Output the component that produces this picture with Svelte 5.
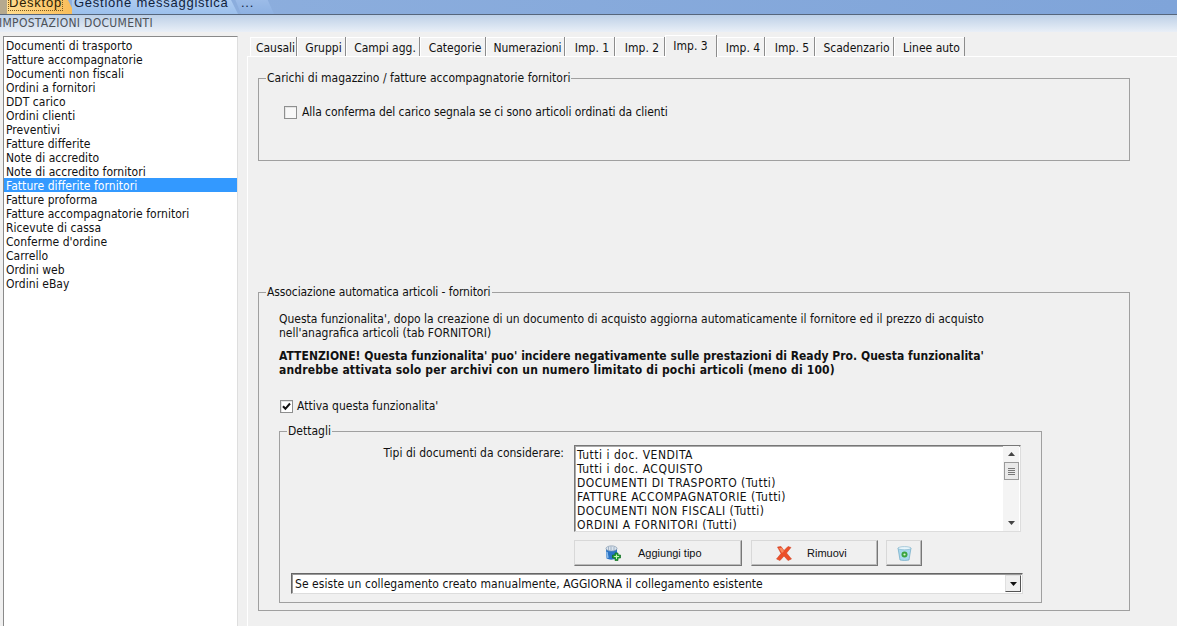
<script>
  const docs = [
    "Documenti di trasporto", "Fatture accompagnatorie", "Documenti non fiscali", "Ordini a fornitori",
    "DDT carico", "Ordini clienti", "Preventivi", "Fatture differite", "Note di accredito",
    "Note di accredito fornitori", "Fatture differite fornitori", "Fatture proforma",
    "Fatture accompagnatorie fornitori", "Ricevute di cassa", "Conferme d'ordine", "Carrello",
    "Ordini web", "Ordini eBay"
  ];
  const tabs = [
    ["Causali", 47], ["Gruppi", 49], ["Campi agg.", 74], ["Categorie", 66], ["Numerazioni", 79], ["Imp. 1", 50],
    ["Imp. 2", 50], ["Imp. 3", 52], ["Imp. 4", 48], ["Imp. 5", 50], ["Scadenzario", 79], ["Linee auto", 71]
  ];
  const tipi = [
    "Tutti i doc. VENDITA", "Tutti i doc. ACQUISTO", "DOCUMENTI DI TRASPORTO (Tutti)",
    "FATTURE ACCOMPAGNATORIE (Tutti)", "DOCUMENTI NON FISCALI (Tutti)", "ORDINI A FORNITORI (Tutti)"
  ];
  let selected = "Fatture differite fornitori";
  let activeTab = "Imp. 3";
</script>

<div class="topbar">
  <div class="apptab active"><span>Desktop</span></div>
  <div class="apptab">Gestione messaggistica</div>
  <div class="apptab more">...</div>
</div>
<div class="titlebar">IMPOSTAZIONI DOCUMENTI</div>

<div class="main">
  <ul class="doclist">
    {#each docs as d}
      <li class:sel={d === selected}>{d}</li>
    {/each}
  </ul>

  <div class="right">
    <div class="tabs">
      {#each tabs as [t, w]}
        <div class="tab" class:on={t === activeTab} style="width:{w}px">{t}</div>
      {/each}
    </div>
    <div class="panel">
      <fieldset class="g1">
        <legend>Carichi di magazzino / fatture accompagnatorie fornitori</legend>
        <label class="check"><span class="box"></span>Alla conferma del carico segnala se ci sono articoli ordinati da clienti</label>
      </fieldset>

      <fieldset class="g2">
        <legend>Associazione automatica articoli - fornitori</legend>
        <p class="info">Questa funzionalita', dopo la creazione di un documento di acquisto aggiorna automaticamente il fornitore ed il prezzo di acquisto<br />nell'anagrafica articoli (tab FORNITORI)</p>
        <p class="warn">ATTENZIONE! Questa funzionalita' puo' incidere negativamente sulle prestazioni di Ready Pro. Questa funzionalita'<br /><span class="wide">andrebbe attivata solo per archivi con un numero limitato di pochi articoli (meno di 100)</span></p>
        <label class="check on"><span class="box">
          <svg width="9" height="9" viewBox="0 0 9 9"><path d="M1 4.2 L3.4 6.8 L8 1.5" fill="none" stroke="#111" stroke-width="2" /></svg>
        </span>Attiva questa funzionalita'</label>

        <fieldset class="g3">
          <legend>Dettagli</legend>
          <div class="tipi">
            <div class="tipilabel">Tipi di documenti da considerare:</div>
            <div class="listbox">
              <ul>
                {#each tipi as t}<li>{t}</li>{/each}
              </ul>
              <div class="scroll">
                <svg width="7" height="4" viewBox="0 0 7 4"><path d="M3.5 0 L7 4 H0 Z" fill="#444" /></svg>
                <div class="thumb"><i></i><i></i><i></i><i></i></div>
                <svg class="down" width="7" height="4" viewBox="0 0 7 4"><path d="M0 0 H7 L3.5 4 Z" fill="#444" /></svg>
              </div>
            </div>
          </div>
          <div class="buttons">
            <button class="add">
              <svg width="16" height="16" viewBox="0 0 16 16">
                <path d="M1 4 L12 4 L12 13 Q6.5 16 1.5 13.5 Z" fill="#2b74c6" />
                <path d="M2 7 Q2.5 11 3 13" stroke="#8fc0ee" stroke-width="1.4" fill="none" />
                <ellipse cx="6.5" cy="3.5" rx="5.5" ry="2.6" fill="#dbe4ee" stroke="#7d93ab" stroke-width=".7" />
                <path d="M3.5 2 V5 M6 1.5 V5.5 M9 2 V5" stroke="#93a6ba" stroke-width=".8" />
                <path d="M10 8 H13 V10 H15.5 V13 H13 V15.5 H10 V13 H7.5 V10 H10 Z" fill="#27a53a" stroke="#0d6b1e" stroke-width=".7" />
                <path d="M11.5 9.5 V14 M9.2 11.5 H14" stroke="#c9f7b8" stroke-width="1" />
              </svg>
              <span>Aggiungi tipo</span>
            </button>
            <button class="rem">
              <svg width="16" height="15" viewBox="0 0 16 15">
                <path d="M1.5 1 L5 0.5 L8 4.5 L12 0.5 L15 1.5 L10.5 7 L15.5 13 L12 14.5 L8 10 L4 14.5 L0.5 13 L5 7.5 Z" fill="#ec5029" stroke="#c9391c" stroke-width=".5" />
                <path d="M3 2 L6 2 L8 5 L6 7 Z" fill="#f78a60" />
              </svg>
              <span>Rimuovi</span>
            </button>
            <button class="bin" aria-label="Cestino">
              <svg width="15" height="15" viewBox="0 0 15 15">
                <path d="M1 2 L14 2 L12 14 Q7.5 15 3 14 Z" fill="#a9d9ee" stroke="#6fa8c4" stroke-width=".7" />
                <ellipse cx="7.5" cy="2.2" rx="6.5" ry="1.6" fill="#e8f5fa" stroke="#7fb2cb" stroke-width=".6" />
                <circle cx="7.5" cy="8.5" r="3" fill="#3aa43f" />
                <circle cx="7.5" cy="8.5" r="1.1" fill="#d8f3d0" />
              </svg>
            </button>
          </div>
          <div class="combo">
            <span>Se esiste un collegamento creato manualmente, AGGIORNA il collegamento esistente</span>
            <div class="arrow">
              <svg width="7" height="4" viewBox="0 0 7 4"><path d="M0 0 H7 L3.5 4 Z" fill="#111" /></svg>
            </div>
          </div>
        </fieldset>
      </fieldset>
    </div>
  </div>
</div>

<style>
  :global(body) {
    margin: 0;
    background: #f0f0f0;
    overflow: hidden;
  }
  :global(#app) {
    height: 626px;
    overflow: hidden;
    font-family: "DejaVu Sans", sans-serif;
    font-stretch: condensed;
    font-size: 12px;
    color: #111;
  }
  .topbar {
    height: 14px;
    background: linear-gradient(90deg, #8fb0de, #7fa4d9);
    border-bottom: 1px solid #56667c;
    display: flex;
    overflow: hidden;
    align-items: flex-end;
  }
  .apptab {
    height: 20px;
    line-height: 17px;
    font-size: 13px;
    font-stretch: normal;
    font-family: "Liberation Sans", sans-serif;
    letter-spacing: 0.75px;
    margin-left: -3px;
    padding: 0 8px 0 2px;
    width: 156px;
    background: linear-gradient(#b4d0f2, #9cc0ec);
    clip-path: polygon(0 0, 156px 0, 100% 100%, 0 100%);
    flex: none;
    color: #10223c;
    white-space: nowrap;
  }
  .apptab.active {
    margin-left: 0;
    width: 54px;
    padding: 0 12px 0 9px;
    background: linear-gradient(90deg, #b5a98f 0 7px, #ffdc8e 7px, #f9bc58);
    clip-path: polygon(0 0, 65px 0, 100% 100%, 0 100%);
    color: #2b1d05;
  }
  .apptab.active span {
    outline: 1px dotted #7a5a20;
  }
  .apptab.more {
    width: 25px;
    padding: 0 8px 0 8px;
    background: linear-gradient(#a2c0ea, #8db1e2);
    clip-path: polygon(0 0, 32px 0, 100% 100%, 8px 100%);
    margin-left: -5px;
  }
  .titlebar {
    height: 17px;
    line-height: 16px;
    margin-bottom: 4px;
    background: linear-gradient(#bdd0e7, #e9eff7);
    color: #4c5158;
    letter-spacing: 0.3px;
    white-space: nowrap;
    margin-left: -1px;
  }
  .main {
    display: flex;
    height: 590px;
  }
  .doclist {
    list-style: none;
    margin: 0 0 0 3px;
    padding: 1px 0 0 0;
    width: 233px;
    flex: none;
    background: #fff;
    border: 1px solid #8a8a8a;
    border-right-color: #dedede;
    border-bottom: 0;
    height: 590px;
  }
  .doclist li {
    height: 14px;
    line-height: 16px;
    padding-left: 2px;
    letter-spacing: 0.05px;
    white-space: nowrap;
  }
  .doclist li.sel {
    background: #3399ff;
    color: #fff;
  }
  .right {
    margin-left: 9px;
    flex: 1;
    min-width: 0;
  }
  .tabs {
    display: flex;
    height: 20px;
    padding-left: 3px;
  }
  .tab {
    box-sizing: border-box;
    height: 19px;
    margin-top: 1px;
    line-height: 23px;
    padding-left: 5px;
    text-align: center;
    white-space: nowrap;
    background: #f3f3f3;
    border-right: 1px solid #8c8c8c;
    box-shadow: inset 1px 1px 0 #fff;
  }
  .tab.on {
    height: 22px;
    margin-top: -1px;
    line-height: 22px;
    position: relative;
    z-index: 1;
    padding-left: 0;
    background: #f0f0f0;
  }
  .panel {
    border-top: 1px solid #fff;
    border-left: 1px solid #fff;
    padding: 14px 0 0 10px;
    height: 560px;
  }
  fieldset {
    margin: 0;
    padding: 0;
    border: 1px solid #a0a0a0;
    box-sizing: border-box;
    min-width: 0;
  }
  legend {
    padding: 0 1px;
    margin-left: 7px;
    line-height: 14px;
  }
  .g1 {
    width: 872px;
    height: 90px;
  }
  .g2 {
    width: 872px;
    height: 326px;
    margin-top: 124px;
  }
  .g2 > legend {
    letter-spacing: -0.1px;
  }
  .check {
    display: flex;
    align-items: center;
    height: 14px;
  }
  .box {
    width: 11px;
    height: 11px;
    margin-right: 5px;
    background: #f8f8f8;
    border: 1px solid #8e8f8f;
    box-shadow: inset 1px 1px 0 #e4e4e4;
    display: flex;
    align-items: center;
    justify-content: center;
    flex: none;
  }
  .g1 .check {
    margin: 20px 0 0 25px;
    letter-spacing: -0.08px;
  }
  .info,
  .warn {
    margin: 0;
    line-height: 14px;
    white-space: nowrap;
    margin-left: 20px;
  }
  .info {
    margin-top: 12px;
    padding-top: 1px;
  }
  .warn {
    margin-top: 9px;
    font-weight: 700;
    letter-spacing: 0.03px;
  }
  .wide {
    letter-spacing: 0.17px;
  }
  .check.on {
    margin: 22px 0 0 21px;
  }
  .check.on .box {
    margin-right: 4px;
    background: #fff;
  }
  .g3 {
    width: 763px;
    height: 179px;
    margin: 11px 0 0 20px;
  }
  .tipi {
    display: flex;
    padding-top: 7px;
  }
  .tipilabel {
    width: 284px;
    text-align: right;
    line-height: 14px;
    margin-top: 1px;
    white-space: nowrap;
  }
  .listbox {
    margin-left: 10px;
    width: 447px;
    height: 87px;
    box-sizing: border-box;
    display: flex;
    background: #fff;
    border: 1px solid #777;
    border-right-color: #ddd;
    border-bottom-color: #ddd;
    box-shadow: inset 1px 1px 0 #aaa;
    overflow: hidden;
  }
  .listbox ul {
    list-style: none;
    margin: 2px 0 0;
    padding: 0 0 0 2px;
    flex: 1;
  }
  .listbox li {
    height: 14px;
    line-height: 14px;
    letter-spacing: 0.5px;
    white-space: nowrap;
  }
  .scroll {
    width: 16px;
    background: #f4f4f4;
    display: flex;
    flex-direction: column;
    align-items: center;
    padding-top: 6px;
    box-sizing: border-box;
    margin-right: 1px;
  }
  .thumb {
    width: 13px;
    height: 16px;
    margin-top: 6px;
    background: #e9e9e9;
    border: 1px solid #9a9a9a;
    display: flex;
    flex-direction: column;
    align-items: center;
    justify-content: center;
    gap: 1px;
  }
  .thumb i {
    display: block;
    width: 7px;
    height: 1px;
    background: #777;
  }
  .down {
    margin-top: auto;
    margin-bottom: 6px;
  }
  .buttons {
    display: flex;
    margin: 8px 0 0 294px;
    gap: 9px;
  }
  button {
    height: 26px;
    padding: 0;
    margin: 0;
    font-family: "Liberation Sans", sans-serif;
    font-size: 11px;
    color: #111;
    background: #f0f0f0;
    border: 1px solid #d8d8d8;
    border-right-color: #777;
    border-bottom-color: #777;
    box-shadow: inset -1px -1px 0 #bbb;
    display: flex;
    align-items: center;
  }
  .add {
    width: 168px;
    padding-left: 30px;
  }
  .add span {
    margin-left: 17px;
  }
  .rem {
    width: 127px;
    padding-left: 24px;
  }
  .rem span {
    margin-left: 15px;
  }
  .bin {
    width: 36px;
    justify-content: center;
    margin-left: -1px;
  }
  .combo {
    margin: 7px 0 0 11px;
    width: 732px;
    height: 21px;
    box-sizing: border-box;
    background: #fff;
    border: 1px solid #666;
    border-right-color: #ddd;
    border-bottom-color: #ddd;
    box-shadow: inset 1px 1px 0 #999;
    display: flex;
    align-items: center;
    padding-left: 3px;
  }
  .combo span {
    flex: 1;
    letter-spacing: 0.05px;
    white-space: nowrap;
  }
  .arrow {
    width: 16px;
    height: 17px;
    background: #f0f0f0;
    border: 1px solid #e0e0e0;
    border-right-color: #555;
    border-bottom-color: #555;
    box-sizing: border-box;
    display: flex;
    align-items: center;
    justify-content: center;
    margin-right: 1px;
  }
</style>
